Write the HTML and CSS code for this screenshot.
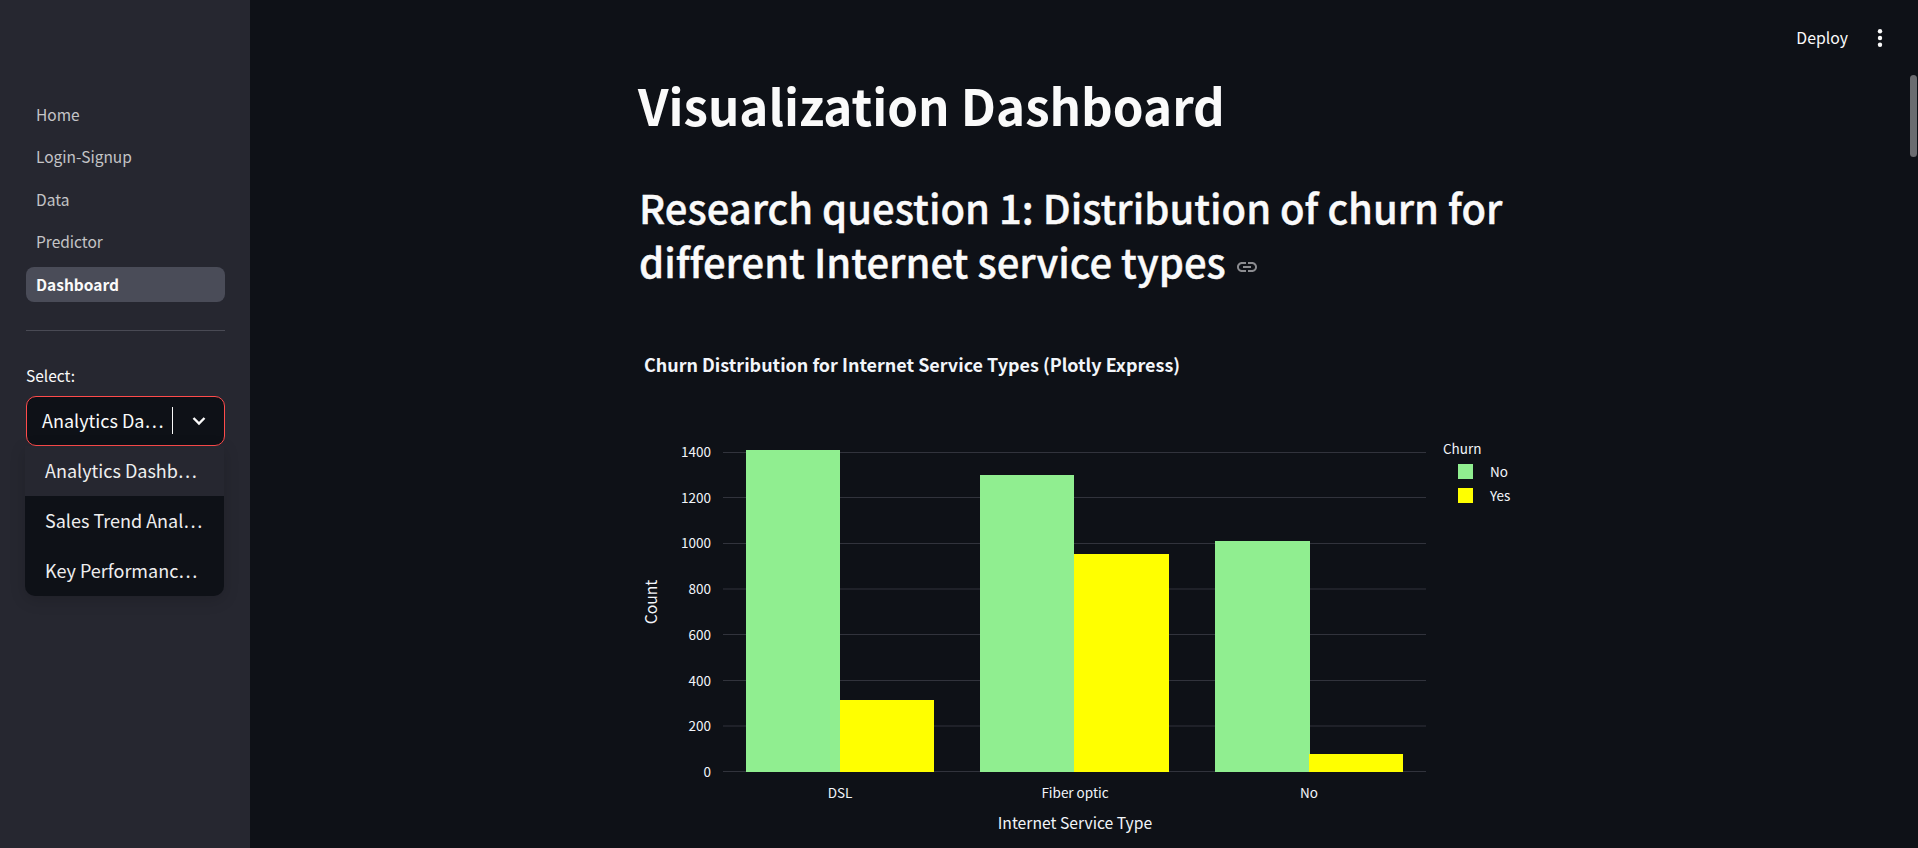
FILE: index.html
```html
<!DOCTYPE html>
<html lang="en">

<head>
    <meta charset="UTF-8">
    <meta name="viewport" content="width=device-width, initial-scale=1.0">
    <title>Visualization Dashboard</title>
    <link rel="stylesheet" href="styles.css">
</head>

<body>
    <!-- sidebar -->
    <aside class="sidebar">
        <nav class="nav">
            <a class="nav-item">Home</a>
            <a class="nav-item">Login-Signup</a>
            <a class="nav-item">Data</a>
            <a class="nav-item">Predictor</a>
            <a class="nav-item active">Dashboard</a>
        </nav>
        <hr class="divider">
        <label class="select-label">Select:</label>
        <div class="select">
            <div class="select-box">
                <span class="select-value">Analytics Da…</span>
                <span class="select-caret"></span>
                <svg class="chevron" viewBox="0 0 16 16" width="16" height="16">
                    <path d="M2.5 5l5.5 5.5 5.5-5.5" fill="none" stroke="#fafafa" stroke-width="2.4" />
                </svg>
            </div>
            <ul class="select-menu">
                <li class="select-option hover">Analytics Dashb…</li>
                <li class="select-option">Sales Trend Anal…</li>
                <li class="select-option">Key Performanc…</li>
            </ul>
        </div>
    </aside>

    <!-- main area -->
    <main class="main">
        <header class="topbar">
            <span class="deploy">Deploy</span>
            <svg class="kebab" viewBox="0 0 6 20" width="6" height="20">
                <circle cx="3" cy="3.2" r="2.2" />
                <circle cx="3" cy="10" r="2.2" />
                <circle cx="3" cy="16.8" r="2.2" />
            </svg>
        </header>

        <section class="content">
            <h1 class="title">Visualization Dashboard</h1>
            <h2 class="question">Research question 1: Distribution of churn for different Internet service types
                <svg class="link-icon" viewBox="0 0 24 24" width="24" height="24">
                    <path d="M3.9 12c0-1.71 1.39-3.1 3.1-3.1h4V7H7c-2.76 0-5 2.24-5 5s2.24 5 5 5h4v-1.9H7c-1.71 0-3.1-1.39-3.1-3.1zM8 13h8v-2H8v2zm9-6h-4v1.9h4c1.71 0 3.1 1.39 3.1 3.1s-1.39 3.1-3.1 3.1h-4V17h4c2.76 0 5-2.24 5-5s-2.24-5-5-5z" />
                </svg>
            </h2>

            <!-- viewBox uses page coordinates so numbers read straight off the screenshot -->
            <svg class="chart" viewBox="638 340 892 500" width="892" height="500">
                <text class="chart-title" x="644" y="372">Churn Distribution for Internet Service Types (Plotly Express)</text>

                <g class="grid">
                    <line x1="723" x2="1426" y1="452.5" y2="452.5" />
                    <line x1="723" x2="1426" y1="497.5" y2="497.5" />
                    <line x1="723" x2="1426" y1="543.5" y2="543.5" />
                    <line x1="723" x2="1426" y1="589" y2="589" />
                    <line x1="723" x2="1426" y1="634.5" y2="634.5" />
                    <line x1="723" x2="1426" y1="680.5" y2="680.5" />
                    <line x1="723" x2="1426" y1="726" y2="726" />
                    <line x1="723" x2="1426" y1="771.5" y2="771.5" />
                </g>

                <g class="ticks-y">
                    <text x="711" y="457">1400</text>
                    <text x="711" y="503">1200</text>
                    <text x="711" y="548">1000</text>
                    <text x="711" y="594">800</text>
                    <text x="711" y="640">600</text>
                    <text x="711" y="686">400</text>
                    <text x="711" y="731">200</text>
                    <text x="711" y="777">0</text>
                </g>

                <rect class="bar-no" x="746" y="450" width="94" height="322" />
                <rect class="bar-yes" x="840" y="700" width="94" height="72" />
                <rect class="bar-no" x="980" y="475" width="94" height="297" />
                <rect class="bar-yes" x="1074" y="554" width="95" height="218" />
                <rect class="bar-no" x="1215" y="541" width="95" height="231" />
                <rect class="bar-yes" x="1309" y="754" width="94" height="18" />

                <g class="ticks-x">
                    <text x="840" y="798">DSL</text>
                    <text x="1075" y="798">Fiber optic</text>
                    <text x="1309" y="798">No</text>
                </g>

                <text class="axis-title" x="1075" y="829">Internet Service Type</text>
                <text class="axis-title" transform="translate(657 602) rotate(-90)">Count</text>

                <g class="legend">
                    <text x="1443" y="454">Churn</text>
                    <rect class="bar-no swatch" x="1458" y="464" width="15" height="15" />
                    <text x="1490" y="477">No</text>
                    <rect class="bar-yes swatch" x="1458" y="488" width="15" height="15" />
                    <text x="1490" y="501">Yes</text>
                </g>
            </svg>
        </section>

        <div class="scrollbar"></div>
    </main>
</body>

</html>
```

FILE: styles.css
```css
* {
    box-sizing: border-box;
}

html,
body {
    height: 100%;
}

body {
    margin: 0;
    display: flex;
    overflow: hidden;
    background-color: #0e1117;
    color: #fafafa;
    font-family: "Noto Sans CJK SC", "Source Sans Pro", "Noto Sans", sans-serif;
    font-variant-ligatures: none;
}

/* sidebar */
.sidebar {
    flex: 0 0 250px;
    height: 100%;
    padding: 98px 25px 0 26px;
    background-color: #262730;
}

.nav {
    display: flex;
    flex-direction: column;
    gap: 7.3px;
}

.nav-item {
    display: block;
    height: 35px;
    padding-left: 10px;
    border-radius: 8px;
    font-size: 15.5px;
    line-height: 33px;
    color: rgba(250, 250, 250, 0.75);
}

.nav-item.active {
    background-color: #4a4c58;
    color: #fafafa;
    font-weight: 700;
    line-height: 35px;
}

.divider {
    height: 1px;
    margin: 28px 0 0;
    border: none;
    background-color: #494a54;
}

.select-label {
    display: block;
    margin-top: 33px;
    font-size: 15.5px;
    line-height: 22px;
}

.select {
    position: relative;
    margin-top: 10px;
}

.select-box {
    display: flex;
    align-items: center;
    height: 50px;
    padding-left: 15px;
    padding-bottom: 1px;
    border: 1px solid #ff4b4b;
    border-radius: 10px;
    background-color: #0e1117;
}

.select-value {
    font-size: 18px;
    line-height: 22px;
    margin-bottom: 2px;
    white-space: nowrap;
}

.select-caret {
    width: 1px;
    height: 27px;
    margin-left: 8px;
    background-color: #fafafa;
}

.chevron {
    margin-left: 18px;
}

.select-menu {
    position: absolute;
    top: 50px;
    left: -1px;
    width: 199px;
    margin: 0;
    padding: 0;
    list-style: none;
    overflow: hidden;
    border-radius: 0 0 10px 10px;
    background-color: #0e1117;
    box-shadow: 0 4px 16px rgba(0, 0, 0, 0.16);
}

.select-option {
    height: 50px;
    padding-left: 20px;
    font-size: 18px;
    line-height: 48px;
    white-space: nowrap;
    color: #eeeeef;
}

.select-option.hover {
    background-color: #262730;
}

/* main */
.main {
    flex: 1;
    position: relative;
    height: 100%;
    overflow: hidden;
}

.topbar {
    display: flex;
    justify-content: flex-end;
    align-items: center;
    height: 76px;
    padding-right: 35px;
}

.deploy {
    font-size: 15.8px;
    line-height: 20px;
    margin-right: 29px;
    margin-bottom: 1px;
}

.kebab {
    fill: #fafafa;
}

.content {
    width: 892px;
    margin: 0 auto;
}

.title {
    margin: -3px 0 0;
    font-size: 49.3px;
    line-height: 64px;
    font-weight: 700;
    color: #fafafa;
}

/* the medium weight runs a bit light next to a semibold, the stroke thickens it */
.question {
    margin: 43px 0 0 1px;
    font-size: 40px;
    line-height: 54px;
    font-weight: 500;
    -webkit-text-stroke: 0.4px #fafafa;
}

.link-icon {
    fill: #8b8c90;
    stroke: none;
    height: 24px;
    margin-top: -24px;
    vertical-align: -1px;
}

.chart {
    display: block;
    margin-top: 52px;
}

.chart text {
    fill: #f2f5fa;
    font-size: 13.5px;
}

.chart .chart-title {
    font-size: 17.95px;
    font-weight: 700;
}

.grid line {
    stroke: #31333c;
    stroke-width: 1;
}

.ticks-y text {
    text-anchor: end;
}

.ticks-x text,
.chart .axis-title {
    text-anchor: middle;
}

.chart .axis-title {
    font-size: 15.7px;
}

.bar-no {
    fill: #90ee90;
}

.bar-yes {
    fill: #ffff00;
}

.scrollbar {
    position: absolute;
    top: 75px;
    right: 1px;
    width: 7px;
    height: 82px;
    border-radius: 4px;
    background-color: #6b6c70;
}
```
